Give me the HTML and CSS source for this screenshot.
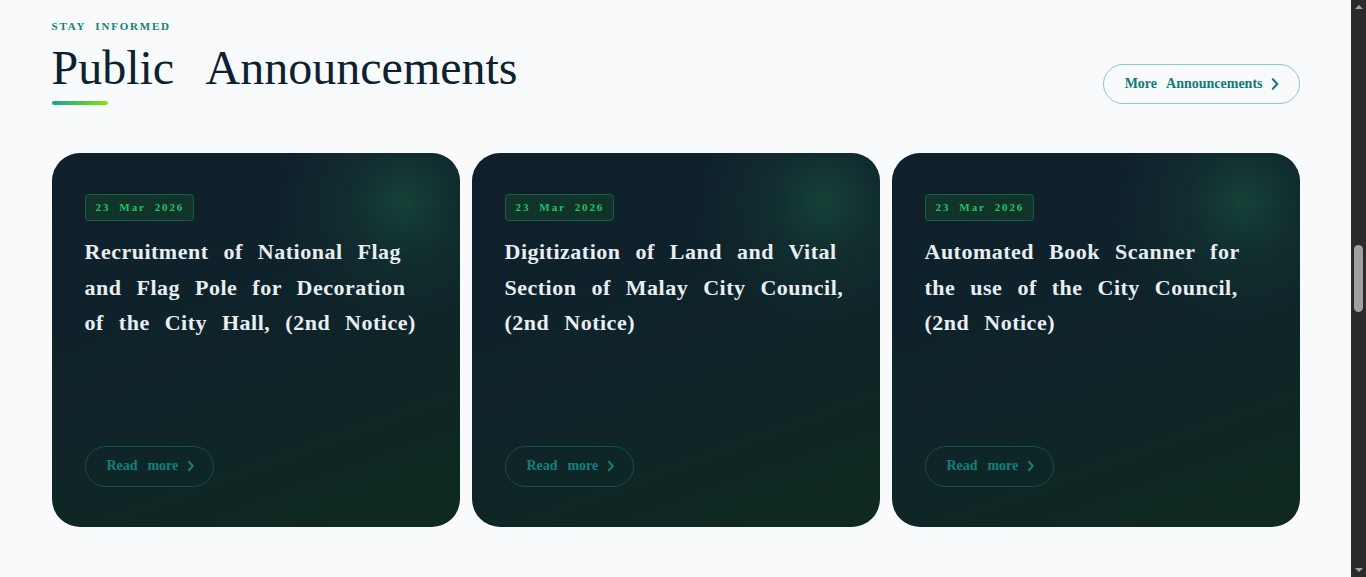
FILE: index.html
```html
<!DOCTYPE html>
<html lang="en">
<head>
<meta charset="utf-8">
<title>Public Announcements</title>
<link rel="stylesheet" href="styles.css">
</head>
<body>
<section class="announcements">
  <div class="container">
    <header class="section-head">
      <div class="head-text">
        <p class="eyebrow">STAY INFORMED</p>
        <h2 class="section-title">Public Announcements</h2>
        <span class="title-bar"></span>
      </div>
      <a class="btn-outline" href="#">More Announcements
        <svg class="chev chev-lg" viewBox="0 0 8 12" aria-hidden="true"><path d="M1.8 1.2 6.3 6 1.8 10.8"/></svg>
      </a>
    </header>

    <div class="card-grid">
      <article class="card">
        <span class="date-badge">23 Mar 2026</span>
        <h3 class="card-title">Recruitment of National Flag and Flag Pole for Decoration of the City Hall, (2nd Notice)</h3>
        <a class="btn-read" href="#">Read more
          <svg class="chev" viewBox="0 0 8 12" aria-hidden="true"><path d="M1.8 1.6 5.8 6 1.8 10.4"/></svg>
        </a>
      </article>
      <article class="card">
        <span class="date-badge">23 Mar 2026</span>
        <h3 class="card-title">Digitization of Land and Vital Section of Malay City Council, (2nd Notice)</h3>
        <a class="btn-read" href="#">Read more
          <svg class="chev" viewBox="0 0 8 12" aria-hidden="true"><path d="M1.8 1.6 5.8 6 1.8 10.4"/></svg>
        </a>
      </article>
      <article class="card">
        <span class="date-badge">23 Mar 2026</span>
        <h3 class="card-title">Automated Book Scanner for the use of the City Council, (2nd Notice)</h3>
        <a class="btn-read" href="#">Read more
          <svg class="chev" viewBox="0 0 8 12" aria-hidden="true"><path d="M1.8 1.6 5.8 6 1.8 10.4"/></svg>
        </a>
      </article>
    </div>
  </div>
</section>

<div class="scrollbar" aria-hidden="true">
  <span class="sb-arrow sb-up"></span>
  <div class="sb-track"><span class="sb-thumb"></span></div>
  <span class="sb-arrow sb-down"></span>
</div>
</body>
</html>
```

FILE: styles.css
```css
html {
  background: #f8fafc;
}

body {
  margin: 0;
  padding-right: 15px;
  background: #f8fafc;
  color: #0f2233;
  font-family: "Liberation Serif", "Times New Roman", serif;
}

.announcements {
  padding: 18px 0 50px;
}

.container {
  max-width: 1248px;
  margin: 0 auto;
}

.section-head {
  display: flex;
  justify-content: space-between;
  align-items: flex-end;
}

.head-text {
  display: flex;
  flex-direction: column;
  align-items: flex-start;
}

.eyebrow {
  margin: 0;
  font-size: 11px;
  line-height: 16px;
  font-weight: 700;
  letter-spacing: 1.8px;
  word-spacing: 0.45em;
  color: #11807b;
}

.section-title {
  margin: 8px 0 0;
  font-size: 48px;
  line-height: 1.1;
  font-weight: 400;
  word-spacing: 0.46em;
  color: #0d2132;
}

.title-bar {
  display: block;
  width: 56px;
  height: 4px;
  margin-top: 6px;
  border-radius: 2px;
  background: linear-gradient(90deg, #12a39a, #8ae20a);
}

.btn-outline {
  display: inline-flex;
  align-items: center;
  box-sizing: border-box;
  height: 40px;
  padding: 0 20px 0 21px;
  margin-bottom: 1px;
  border: 1px solid #92c9c9;
  border-radius: 20px;
  font-size: 14px;
  font-weight: 700;
  word-spacing: 0.45em;
  color: #0f7a78;
  text-decoration: none;
}

.chev {
  width: 8px;
  height: 12px;
  margin-left: 9px;
  fill: none;
  stroke: currentColor;
  stroke-width: 1.9;
  stroke-linecap: round;
  stroke-linejoin: round;
}

.chev-lg {
  margin-left: 8px;
  stroke-width: 2;
}

.card-grid {
  display: grid;
  grid-template-columns: repeat(3, 1fr);
  gap: 12px;
  margin-top: 48px;
}

.card {
  display: flex;
  flex-direction: column;
  align-items: flex-start;
  box-sizing: border-box;
  min-height: 374px;
  padding: 41px 33px 40px;
  border-radius: 28px;
  background:
    radial-gradient(circle at 86% 13%, rgba(28, 96, 70, 0.5) 0, rgba(22, 80, 60, 0.22) 55px, rgba(15, 40, 40, 0) 130px),
    linear-gradient(160deg, #0f1f2d 0%, #0f2429 55%, #0e2a1f 100%);
  color: #e8eef2;
}

.date-badge {
  display: inline-block;
  padding: 6.5px 9px 6.5px 10px;
  border: 1px solid #1d5c40;
  border-radius: 4px;
  background: #10342a;
  font-size: 11px;
  line-height: 1.15;
  font-weight: 700;
  letter-spacing: 1.9px;
  word-spacing: 0.4em;
  color: #25c064;
}

.card-title {
  margin: 13px 0 0;
  font-size: 22px;
  line-height: 1.6;
  font-weight: 700;
  letter-spacing: 0.5px;
  word-spacing: 9px;
  color: #e8eef2;
}

.btn-read {
  display: inline-flex;
  align-items: center;
  box-sizing: border-box;
  height: 41px;
  margin-top: auto;
  padding: 0 18px 0 21px;
  border: 1px solid #164c4c;
  border-radius: 21px;
  font-size: 14px;
  font-weight: 700;
  word-spacing: 0.45em;
  color: #13807e;
  text-decoration: none;
}

/* window scrollbar chrome, drawn over the page edge */
.scrollbar {
  position: fixed;
  top: 0;
  right: 0;
  bottom: 0;
  width: 15px;
  display: flex;
  flex-direction: column;
  align-items: center;
  background: #2b2b2b;
}

.sb-arrow {
  flex: none;
  width: 0;
  height: 0;
  margin: 5px 0;
  border-left: 4px solid transparent;
  border-right: 4px solid transparent;
}

.sb-up {
  border-bottom: 4px solid #a3a3a3;
}

.sb-down {
  border-top: 4px solid #a3a3a3;
}

.sb-track {
  flex: 1;
  width: 100%;
  display: flex;
  justify-content: center;
  padding-top: 231px;
}

.sb-thumb {
  width: 9px;
  height: 67px;
  border-radius: 5px;
  background: #a0a0a0;
}
```
